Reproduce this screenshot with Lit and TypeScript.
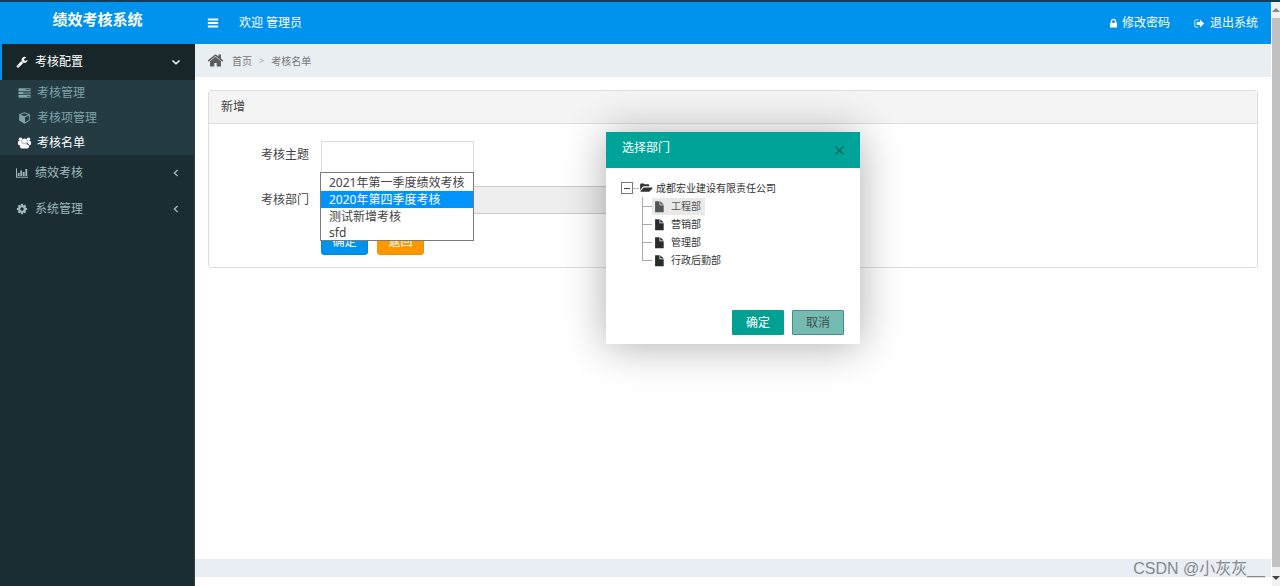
import { LitElement, html, css, svg } from "lit";
import { customElement, property, state } from "lit/decorators.js";
import { classMap } from "lit/directives/class-map.js";

const ICONS: Record<string, unknown> = {
  bars: svg`<path d="M128 240h1536v270H128zM128 761h1536v270H128zM128 1282h1536v270H128z"/>`,
  lock: svg`<path d="M640 768h512v-192q0-106-75-181t-181-75-181 75-75 181v192zm832 96v576q0 40-28 68t-68 28h-960q-40 0-68-28t-28-68v-576q0-40 28-68t68-28h32v-192q0-184 132-316t316-132 316 132 132 316v192h32q40 0 68 28t28 68z"/>`,
  signOut: svg`<path d="M704 1440q0 4 1 20t.5 26.5-3 23.5-10 19.5-20.5 6.5h-320q-119 0-203.500-84.500t-84.500-203.500v-704q0-119 84.500-203.500t203.500-84.500h320q13 0 22.500 9.500t9.500 22.500q0 4 1 20t.5 26.500-3 23.500-10 19.500-20.500 6.500h-320q-66 0-113 47t-47 113v704q0 66 47 113t113 47h312l11.500 1 11.500 3 8 5.500 7 9 2 13.500zm928-544q0 26-19 45l-544 544q-19 19-45 19t-45-19-19-45v-288h-448q-26 0-45-19t-19-45v-384q0-26 19-45t45-19h448v-288q0-26 19-45t45-19 45 19l544 544q19 19 19 45z"/>`,
  home: svg`<path d="M1472 992v480q0 26-19 45t-45 19h-384v-384h-256v384h-384q-26 0-45-19t-19-45v-480q0-1 .5-3t.5-3l575-474 575 474q1 2 1 6zm223-69l-62 74q-8 9-21 11h-3q-13 0-21-7l-692-577-692 577q-12 8-24 7-13-2-21-11l-62-74q-8-10-7-23.500t11-21.500l719-599q32-26 76-26t76 26l244 204v-195q0-14 9-23t23-9h192q14 0 23 9t9 23v408l219 182q10 8 11 21.500t-7 23.500z"/>`,
  wrench: svg`<path d="M448 1472q0-26-19-45t-45-19-45 19-19 45 19 45 45 19 45-19 19-45zm644-420l-682 682q-37 37-90 37-52 0-91-37l-106-108q-38-36-38-90 0-53 38-91l681-681q39 98 114.500 173.500t173.500 114.500zm634-435q0 39-23 106-47 134-164.500 217.500t-258.500 83.500q-185 0-316.500-131.500t-131.500-316.500 131.500-316.500 316.500-131.500q58 0 121.500 16.500t107.500 46.500q16 11 16 28t-16 28l-293 169v224l193 107q5-3 79-48.500t135.500-81 70.500-35.500q15 0 23.500 10t8.500 25z"/>`,
  cog: svg`<path d="M1152 896q0-106-75-181t-181-75-181 75-75 181 75 181 181 75 181-75 75-181zm512-109v222q0 12-8 23t-20 13l-185 28q-19 54-39 91 35 50 107 138 10 12 10 25t-9 23q-27 37-99 108t-94 71q-12 0-26-9l-138-108q-44 23-91 38-16 136-29 186-7 28-36 28h-222q-14 0-24.500-8.500t-11.500-21.500l-28-184q-49-16-90-37l-141 107q-10 9-25 9-14 0-25-11-126-114-165-168-7-10-7-23 0-12 8-23 15-21 51-66.500t54-70.500q-27-50-41-99l-183-27q-13-2-21-12.500t-8-23.500v-222q0-12 8-23t19-13l186-28q14-46 39-92-40-57-107-138-10-12-10-24 0-10 9-23 26-36 98.500-107.500t94.500-71.500q13 0 26 10l138 107q44-23 91-38 16-136 29-186 7-28 36-28h222q14 0 24.500 8.500t11.500 21.500l28 184q49 16 90 37l142-107q9-9 24-9 13 0 25 10 129 119 165 170 7 8 7 22 0 12-8 23-15 21-51 66.500t-54 70.500q26 50 41 98l183 28q13 2 21 12.500t8 23.500z"/>`,
  server: svg`<path fill-rule="evenodd" d="M0 200h1792v400H0zM1060 340h600v120h-600zM0 696h1792v400H0zM700 836h960v120H700zM0 1192h1792v400H0zM1260 1332h400v120h-400z"/>`,
  cube: svg`<path fill-rule="evenodd" d="M896 40l800 290v900q0 50-50 80L896 1742 146 1310q-50-30-50-80V330zM896 190L300 406l596 230 596-230zM970 1520l590-330V560l-590 225z"/>`,
  users: svg`<circle cx="300" cy="340" r="270"/><circle cx="1492" cy="340" r="270"/><circle cx="896" cy="600" r="390"/><path d="M-80 760q0-180 170-180h400q-80 300 120 500-190 20-280 160H120q-200-60-200-250zM1872 760q0-180-170-180h-400q80 300-120 500 190 20 280 160h210q200-60 200-250zM200 1340q0-380 300-430l396 130 396-130q300 50 300 430 0 370-270 370H470q-270 0-270-370z"/>`,
  chart: svg`<path d="M0 200h150v1260h1642v150H0zM260 900h270v460H260zM640 520h270v840H640zM1020 740h270v620h-270zM1400 300h270v1060h-270z"/>`,
  folder: svg`<path d="M20 1260V360q0-150 150-150h330q150 0 150 130h580q150 0 150 140v150H600q-160 0-260 130zM1890 850q0 30-25 65l-350 440q-80 110-200 110H110q-70 0-40-80l370-450q90-110 200-110h1180q70 0 70 25z"/>`,
  file: svg`<path d="M180 60h720v640h680v1132H180zM1020 60l560 520h-560z"/>`,
  down: svg`<path d="M260 620l636 580 636-580" fill="none" stroke="currentColor" stroke-width="260"/>`,
  left: svg`<path d="M1180 340L600 896l580 556" fill="none" stroke="currentColor" stroke-width="240"/>`,
  close: svg`<path d="M100 100l1592 1592M1692 100L100 1692" fill="none" stroke="currentColor" stroke-width="250"/>`,
};

@customElement("ui-icon")
class UiIcon extends LitElement {
  static styles = css`
    :host { display: inline-flex; flex: none; width: 12px; height: 12px; }
    .glyph { width: 100%; height: 100%; fill: currentColor; overflow: visible; }
  `;
  @property() name = "";
  render() {
    return html`<svg class="glyph" viewBox="0 0 1792 1792" aria-hidden="true">${ICONS[this.name]}</svg>`;
  }
}

@customElement("side-menu")
class SideMenu extends LitElement {
  static styles = css`
    :host { display: block; background: #1b2c32; color: #9db9bd; box-shadow: inset -1px 0 #304147; }
    .list { list-style: none; margin: 0; padding: 0; }
    .item { display: flex; align-items: center; gap: 6px; height: 36px; padding: 0 14px 0 15px; color: inherit; text-decoration: none; }
    .open { background: #18262a; color: #fff; border-left: 2px solid #0093ee; padding-left: 13px; }
    .label { flex: 1; }
    .lead { width: 14px; height: 12px; }
    .arrow { width: 10px; height: 10px; }
    .sub { background: #253b43; }
    .child { display: flex; align-items: center; gap: 6px; height: 25px; padding-left: 18px; color: #7fa3aa; text-decoration: none; }
    .kid { width: 13px; height: 12px; }
    .current { color: #fff; }
  `;
  render() {
    const children = [
      { icon: "server", text: "考核管理" },
      { icon: "cube", text: "考核项管理" },
      { icon: "users", text: "考核名单", current: true },
    ];
    return html`<nav>
      <ul class="list">
        <li>
          <a class="item open" href="#"><ui-icon class="lead" name="wrench"></ui-icon><span class="label">考核配置</span><ui-icon class="arrow" name="down"></ui-icon></a>
          <ul class="list sub">
            ${children.map((c) => html`<li><a class=${classMap({ child: true, current: !!c.current })} href="#"><ui-icon class="kid" name=${c.icon}></ui-icon>${c.text}</a></li>`)}
          </ul>
        </li>
        <li><a class="item" href="#"><ui-icon class="lead" name="chart"></ui-icon><span class="label">绩效考核</span><ui-icon class="arrow" name="left"></ui-icon></a></li>
        <li><a class="item" href="#"><ui-icon class="lead" name="cog"></ui-icon><span class="label">系统管理</span><ui-icon class="arrow" name="left"></ui-icon></a></li>
      </ul>
    </nav>`;
  }
}

@customElement("department-dialog")
class DepartmentDialog extends LitElement {
  static styles = css`
    :host { display: block; background: #fff; box-shadow: 0 2px 40px rgba(0, 0, 0, 0.32); color: #333; }
    .head { display: flex; align-items: center; justify-content: space-between; height: 36px; padding: 0 16px; background: #00a398; }
    .title { margin: 0 0 4px; font-size: 12px; line-height: 16px; font-weight: 400; color: #fff; }
    .close { display: flex; padding: 0; border: 0; background: none; color: #086560; }
    .cross { width: 9px; height: 9px; }
    .tree { padding: 11px 15px 0; font-size: 10px; line-height: 18px; }
    .root { display: flex; align-items: center; height: 18px; }
    .toggle { box-sizing: border-box; display: flex; align-items: center; justify-content: center; width: 12px; height: 12px; padding: 0; border: 1px solid #777; background: #fff; }
    .minus { width: 6px; height: 1px; background: #444; }
    .stub { width: 6px; height: 1px; background: #bbb; margin-right: 1px; }
    .name { margin-left: 4px; }
    .list { list-style: none; margin: 0 0 0 21px; padding: 0; }
    .leaf { display: flex; align-items: center; height: 18px; background: linear-gradient(#aaa, #aaa) left top / 1px 100% no-repeat; }
    .leaf:last-child { background-size: 1px 50%; }
    .leaf::before { content: ""; width: 10px; height: 1px; background: #aaa; }
    .node { display: flex; align-items: center; gap: 6px; height: 17px; padding: 0 4px 0 2px; border: 0; background: none; color: inherit; font: inherit; }
    .picked { background: #e9e9e9; color: #555; }
    .file { width: 11px; height: 11px; color: #2b2b2b; }
    .picked .file { color: #555; }
    .actions { display: flex; justify-content: flex-end; gap: 8px; padding: 41px 16px 9px; }
    .btn { box-sizing: border-box; width: 52px; height: 25px; padding: 0; border: 1px solid #009f94; border-radius: 1px; background: #00a093; color: #fff; font: inherit; font-size: 12px; }
    .cancel { background: #76bbb2; border-color: #3f9289; color: #3b504e; }
  `;
  @state() picked = "工程部";
  render() {
    return html`
      <header class="head"><h2 class="title">选择部门</h2><button class="close" aria-label="关闭"><ui-icon class="cross" name="close"></ui-icon></button></header>
      <div class="tree">
        <div class="root"><button class="toggle" aria-label="收起"><span class="minus"></span></button><span class="stub"></span><ui-icon name="folder"></ui-icon><span class="name">成都宏业建设有限责任公司</span></div>
        <ul class="list">
          ${["工程部", "营销部", "管理部", "行政后勤部"].map((d) => html`<li class="leaf"><button class=${classMap({ node: true, picked: d === this.picked })} @click=${() => (this.picked = d)}><ui-icon class="file" name="file"></ui-icon>${d}</button></li>`)}
        </ul>
      </div>
      <div class="actions"><button class="btn">确定</button><button class="btn cancel">取消</button></div>
    `;
  }
}

@customElement("app-root")
class AppRoot extends LitElement {
  static styles = css`
    :host { display: grid; grid-template-columns: 1fr 9px; min-height: 100vh; position: relative; overflow: hidden; background: #fff; border-top: 2px solid #133c54; box-sizing: border-box; font: 12px/16px "Noto Sans", "Noto Sans CJK SC", sans-serif; color: #444; }
    .page { display: grid; grid-template-columns: 195px 1fr; grid-template-rows: 42px 1fr; min-width: 0; }
    .top { grid-column: 1 / -1; display: flex; align-items: center; background: #0093ee; color: #fff; }
    .brand { box-sizing: border-box; width: 195px; margin: 0 0 8px; text-align: center; font-size: 15px; line-height: 20px; font-weight: 700; }
    .burger { display: flex; margin: 0 20px 0 12px; padding: 0; border: 0; background: none; color: #fff; }
    .welcome { flex: 1; }
    .link { display: flex; align-items: center; gap: 3px; margin-right: 24px; color: #fff; text-decoration: none; }
    .link:last-child { margin-right: 13px; }
    .small { width: 11px; height: 11px; }
    .exit { gap: 5px; }
    .content { position: relative; display: flex; flex-direction: column; min-width: 0; padding-bottom: 9px; }
    .crumbs { display: flex; align-items: center; gap: 7px; height: 33px; padding: 0 12px; background: #e9eef3; font-size: 10px; color: #777; }
    .crumb { color: inherit; text-decoration: none; }
    .house { width: 17px; height: 17px; margin-right: 1px; color: #5c5c5c; }
    .sep { color: #aaa; font-size: 9px; }
    .card { margin: 13px 13px 0; border: 1px solid #ddd; border-radius: 3px; }
    .card-title { margin: 0; padding: 8px 12px; border-bottom: 1px solid #ddd; background: #f4f4f4; font-size: 12px; line-height: 16px; font-weight: 400; }
    .form { display: grid; grid-template-columns: 100px 1fr; column-gap: 12px; padding: 17px 0 12px; }
    .caption { text-align: right; line-height: 28px; }
    .field { position: relative; width: 153px; height: 45px; }
    .select { box-sizing: border-box; appearance: none; width: 153px; height: 34px; border: 1px solid #ddd; background: #fff; font: inherit; }
    .options { position: absolute; z-index: 1; top: 31px; left: -1px; right: 0; box-sizing: border-box; list-style: none; margin: 0; padding: 1px 0 0; border: 1px solid #7a7a7a; background: #fff; }
    .option { padding: 0 8px; line-height: 17px; white-space: nowrap; }
    .option:last-child { line-height: 15px; }
    .active { background: #0093fb; color: #fff; }
    .dept { box-sizing: border-box; width: 460px; height: 28px; padding: 0 8px; border: 1px solid #ccc; background: #eee; font: inherit; }
    .buttons { grid-column: 2; display: flex; gap: 9px; padding-top: 14px; }
    .btn { width: 47px; height: 27px; padding: 0; border: 1px solid #0086dc; border-radius: 3px; background: #0093ee; color: #fff; font: inherit; }
    .warn { border-color: #f68c00; background: #ff9800; }
    .footer { height: 18px; margin-top: auto; background: #e9edf4; }
    .dialog { position: absolute; z-index: 2; top: 88px; left: 50%; width: 254px; transform: translateX(-50%); }
    .bar { display: flex; flex-direction: column; align-items: center; background: #f1f1f1; border-left: 1px solid #fff; }
    .thumb { flex: 1; align-self: stretch; background: #c1c1c1; }
    .up, .down { width: 0; height: 0; border: 4px solid transparent; }
    .up { margin: 2px 0 6px; border-bottom-color: #888; }
    .down { margin: 9px 0 2px; border-top-color: #444; }
    .mark { position: absolute; z-index: 3; right: 15px; bottom: 7px; font: 16px/20px "Liberation Sans", "Noto Sans CJK SC", sans-serif; color: #85888d; }
  `;
  @state() topic = "2020年第四季度考核";
  render() {
    const topics = ["2021年第一季度绩效考核", "2020年第四季度考核", "测试新增考核", "sfd"];
    return html`
      <div class="page">
        <header class="top">
          <h1 class="brand">绩效考核系统</h1>
          <button class="burger" aria-label="菜单"><ui-icon name="bars"></ui-icon></button>
          <span class="welcome">欢迎 管理员</span>
          <a class="link" href="#"><ui-icon class="small" name="lock"></ui-icon>修改密码</a>
          <a class="link exit" href="#"><ui-icon class="small" name="signOut"></ui-icon>退出系统</a>
        </header>
        <side-menu></side-menu>
        <main class="content">
          <nav class="crumbs"><ui-icon class="house" name="home"></ui-icon><a class="crumb" href="#">首页</a><span class="sep">&gt;</span><a class="crumb" href="#">考核名单</a></nav>
          <section class="card">
            <h2 class="card-title">新增</h2>
            <form class="form">
              <label class="caption" for="topic">考核主题</label>
              <div class="field">
                <select class="select" id="topic"><option></option></select>
                <ul class="options" role="listbox" aria-label="考核主题">
                  ${topics.map((t) => html`<li class=${classMap({ option: true, active: t === this.topic })} role="option" aria-selected=${t === this.topic} @click=${() => (this.topic = t)}>${t}</li>`)}
                </ul>
              </div>
              <label class="caption" for="dept">考核部门</label>
              <input class="dept" id="dept" disabled />
              <div class="buttons"><button class="btn" type="button">确定</button><button class="btn warn" type="button">返回</button></div>
            </form>
          </section>
          <footer class="footer"></footer>
          <department-dialog class="dialog" role="dialog" aria-label="选择部门"></department-dialog>
        </main>
      </div>
      <div class="bar" aria-hidden="true"><span class="up"></span><span class="thumb"></span><span class="down"></span></div>
      <span class="mark">CSDN @小灰灰__</span>
    `;
  }
}
